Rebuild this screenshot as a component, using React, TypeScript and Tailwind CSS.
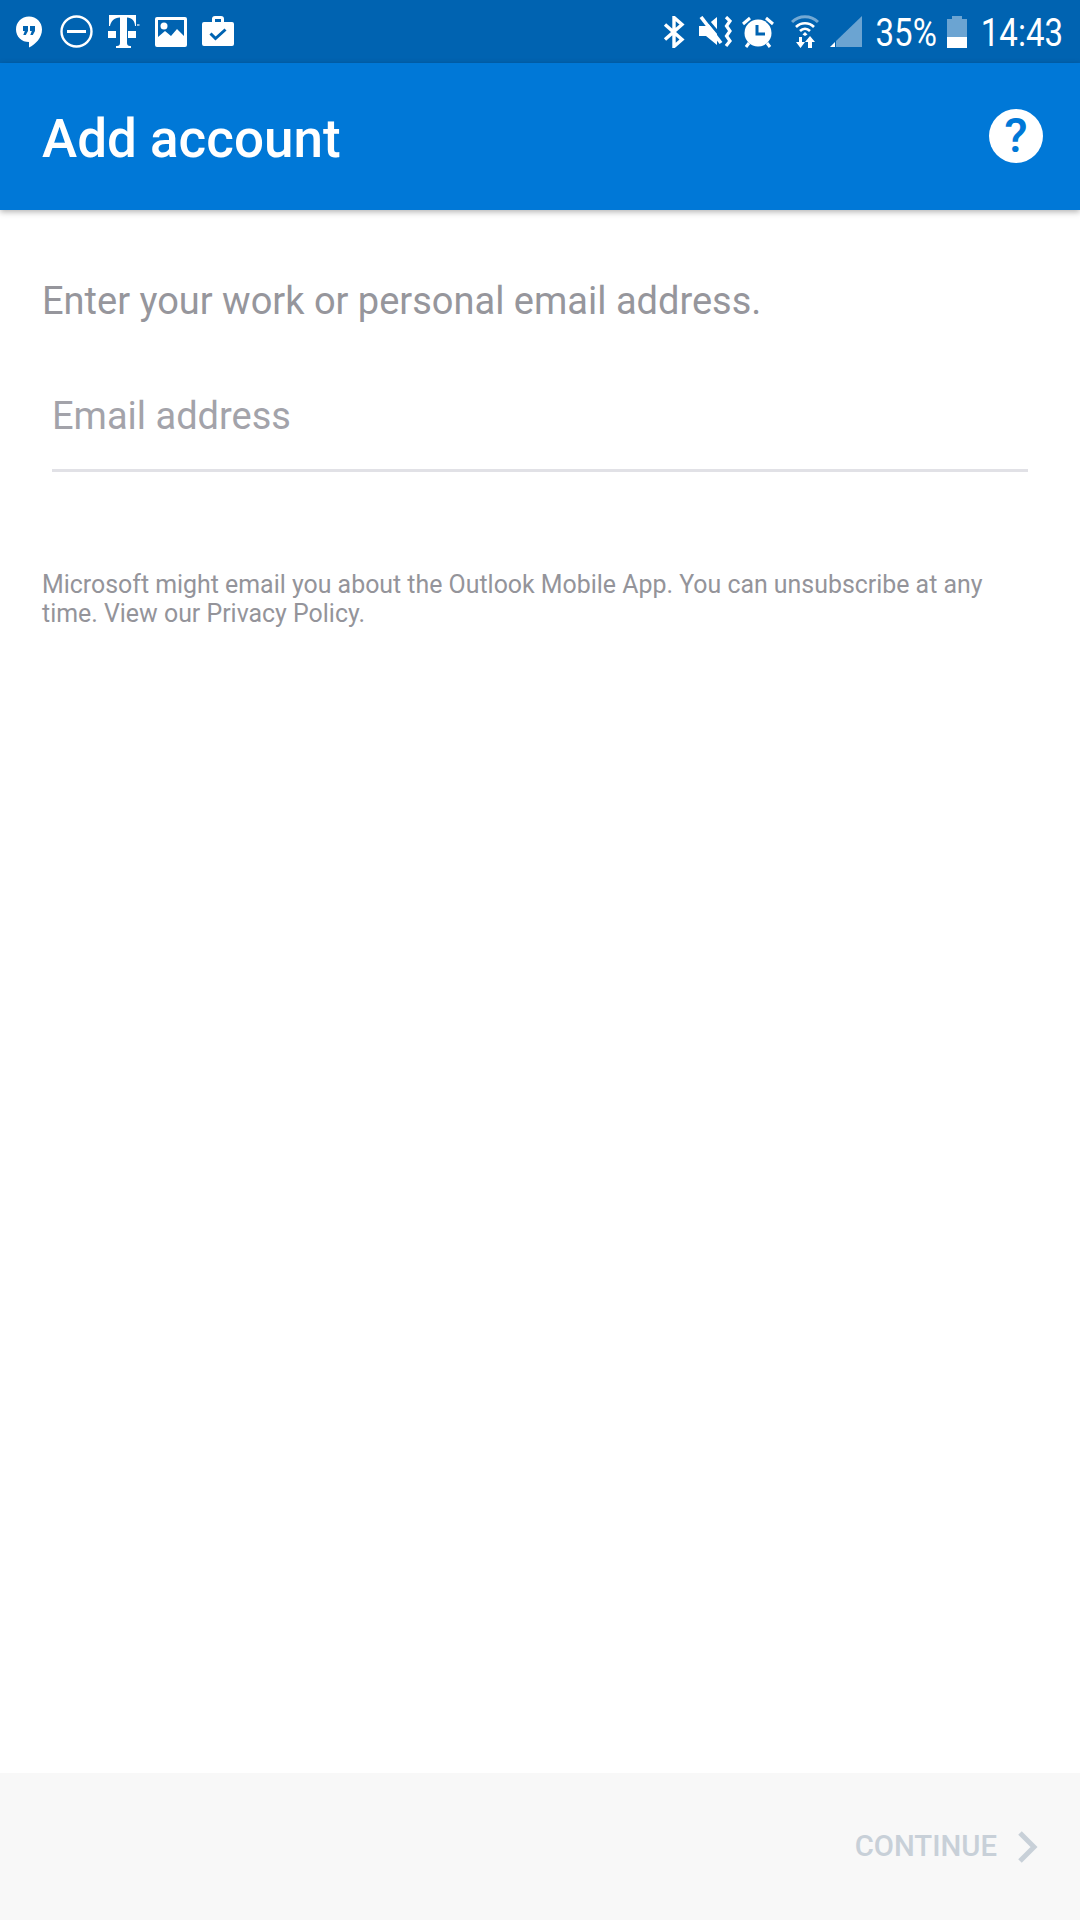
const font = "font-['Roboto','Liberation_Sans',sans-serif]";

function Hangouts() {
  return (
    <svg width="28" height="32" viewBox="0 0 28 32" className="ml-[15px]">
      <path d="M14 0.500C6.500 0.500 1 6.200 1 13.400 1 20.600 6.800 26 14 26v5.500c6.600-3.400 13-9.800 13-18.100C27 6.200 21.500 0.500 14 0.500z" fill="#fff" />
      <path d="M8 10h5v5l-2.200 4H8.300l1.500-4H8zM15 10h5v5l-2.200 4h-2.500l1.500-4H15z" fill="#0063b1" />
    </svg>
  );
}

function Dnd() {
  return (
    <svg width="33" height="33" viewBox="0 0 33 33" className="ml-[17px]">
      <circle cx="16.500" cy="16.500" r="15" fill="none" stroke="#fff" strokeWidth="2.400" />
      <rect x="7" y="15" width="19" height="3" fill="#fff" />
    </svg>
  );
}

function TLogo() {
  return (
    <svg width="32" height="35" viewBox="0 0 32 35" className="ml-[15px]">
      <path d="M1 1H28V12H27C27 7 24 4 19 3.500V29C19 31 20 32 22 32H23V34H8V32H9C11 32 12 31 12 29V3.500C6 4 3 7 2 12H1z" fill="#fff" />
      <rect x="0" y="17" width="8" height="7" fill="#fff" />
      <rect x="20" y="17" width="8" height="7" fill="#fff" />
      <rect x="29" y="10" width="2.500" height="2" fill="#fff" fillOpacity=".6" />
    </svg>
  );
}

function ImageIcon() {
  return (
    <svg width="32" height="30" viewBox="0 0 32 30" className="ml-[15px]">
      <path fillRule="evenodd" d="M2 0h28a2 2 0 0 1 2 2v26a2 2 0 0 1-2 2H2a2 2 0 0 1-2-2V2a2 2 0 0 1 2-2zm1 3v17l7-6 6 5 6-7 7 7V3z" fill="#fff" />
      <circle cx="9" cy="9" r="3.500" fill="#fff" />
    </svg>
  );
}

function Briefcase() {
  return (
    <svg width="32" height="31" viewBox="0 0 32 31" className="ml-[15px] -translate-y-px">
      <path fillRule="evenodd" d="M10 7V4a3 3 0 0 1 3-3h6a3 3 0 0 1 3 3v3h8a2 2 0 0 1 2 2v20a2 2 0 0 1-2 2H2a2 2 0 0 1-2-2V9a2 2 0 0 1 2-2zm3-3v3h6V4z" fill="#fff" />
      <path d="M8.500 18.500l5 5 10-9" fill="none" stroke="#0063b1" strokeWidth="3" />
    </svg>
  );
}

function Bluetooth() {
  return (
    <svg width="22" height="32" viewBox="0 0 22 32">
      <path d="M2 8.500l17 15-8 7V1.500l8 7-17 15" fill="none" stroke="#fff" strokeWidth="3.400" />
    </svg>
  );
}

function Mute() {
  return (
    <svg width="34" height="32" viewBox="0 0 34 32" className="ml-[13px]">
      <path d="M1 10h7l11-9v28l-11-9H1z" fill="#fff" />
      <path d="M5 -1l22 26" stroke="#0063b1" strokeWidth="3" />
      <path d="M3 1l20 26" stroke="#fff" strokeWidth="3.600" />
      <path d="M28 1l4 4-3.500 5 3.500 5-3.500 5 3.500 5-4 5" fill="none" stroke="#fff" strokeWidth="3.200" />
    </svg>
  );
}

function Alarm() {
  return (
    <svg width="32" height="32" viewBox="0 0 32 32" className="ml-[10px]">
      <path d="M1 8l7-6M31 8l-7-6M7 27l-3 4M25 27l3 4" stroke="#fff" strokeWidth="3" fill="none" />
      <circle cx="16" cy="17" r="13.500" fill="#fff" />
      <path d="M15 9v9h8" fill="none" stroke="#0063b1" strokeWidth="3" />
    </svg>
  );
}

function Wifi() {
  return (
    <svg width="28" height="33" viewBox="0 0 28 33" className="ml-[17px]">
      <path d="M1 7c7-7 19-7 26 0" fill="none" stroke="#fff" strokeOpacity=".45" strokeWidth="3" />
      <path d="M5 12c5-5 13-5 18 0M9 16c3-3 7-3 10 0" fill="none" stroke="#fff" strokeWidth="2.600" />
      <path d="M14 17l2.500 2.500-2.500 1.500-2.500-1.500z" fill="#fff" />
      <path d="M8 22h3v5h3l-4.500 6L5 27h3zM19 21l5 6h-3v6h-4v-6h-3z" fill="#fff" />
    </svg>
  );
}

function Signal() {
  return (
    <svg width="32" height="32" viewBox="0 0 32 32" className="ml-[11px]">
      <path d="M32 0v31H6V25z" fill="#fff" fillOpacity=".42" />
      <path d="M5 26v5H0z" fill="#fff" />
    </svg>
  );
}

function Battery() {
  return (
    <svg width="20" height="32" viewBox="0 0 20 32" className="ml-[10px]">
      <path d="M0 3h5V0h10v3h5v20H0z" fill="#fff" fillOpacity=".42" />
      <rect x="0" y="21" width="20" height="11" fill="#fff" />
    </svg>
  );
}

export default function App() {
  return (
    <div className={`${font} flex h-[1920px] w-[1080px] flex-col bg-white`}>
      {/* status bar */}
      <div className="flex h-[63px] shrink-0 items-center justify-between bg-[#0063b1] text-white">
        <div className="flex items-center">
          <Hangouts />
          <Dnd />
          <TLogo />
          <ImageIcon />
          <Briefcase />
        </div>
        <div className="flex items-center pr-[17px]">
          <Bluetooth />
          <Mute />
          <Alarm />
          <Wifi />
          <Signal />
          <span className="ml-[14px] translate-y-px scale-y-[1.18] text-[33px] leading-none">35%</span>
          <Battery />
          <span className="ml-[14px] translate-y-px scale-y-[1.18] text-[33px] leading-none">14:43</span>
        </div>
      </div>

      {/* app bar */}
      <div className="z-10 flex h-[147px] shrink-0 items-center justify-between bg-[#0078d7] pl-[42px] pr-[37px] shadow-[0_2px_6px_rgba(0,0,0,0.3)]">
        <h1 className="pt-[6px] text-[53px] font-medium leading-none text-white">Add account</h1>
        <div className="flex h-[54px] w-[54px] -translate-y-px items-center justify-center rounded-full bg-white text-[48px] font-medium leading-none text-[#0078d7]">
          ?
        </div>
      </div>

      {/* form */}
      <div className="flex-1 px-[42px] pt-[69px]">
        <p className="text-[38px] leading-[44px] text-[#96969c]">
          Enter your work or personal email address.
        </p>
        <div className="ml-[10px] mr-[10px] mt-[71px] border-b-[3px] border-[#e1e1e6] pb-[31px] text-[38px] leading-[44px] text-[#a3a3aa]">
          Email address
        </div>
        <p className="mt-[98px] text-[24.900px] leading-[29px] text-[#94949a]">
          Microsoft might email you about the Outlook Mobile App. You can unsubscribe at any time. View our Privacy Policy.
        </p>
      </div>

      {/* footer */}
      <div className="flex h-[147px] shrink-0 items-center justify-end bg-[#f8f8f8] pr-[42px]">
        <span className="text-[29.300px] font-medium leading-none text-[#c8d0d8]">CONTINUE</span>
        <svg width="20" height="32" viewBox="0 0 20 32" className="ml-[21px]">
          <path d="M2 2l14 14L2 30" fill="none" stroke="#c8d0d8" strokeWidth="5" />
        </svg>
      </div>
    </div>
  );
}
